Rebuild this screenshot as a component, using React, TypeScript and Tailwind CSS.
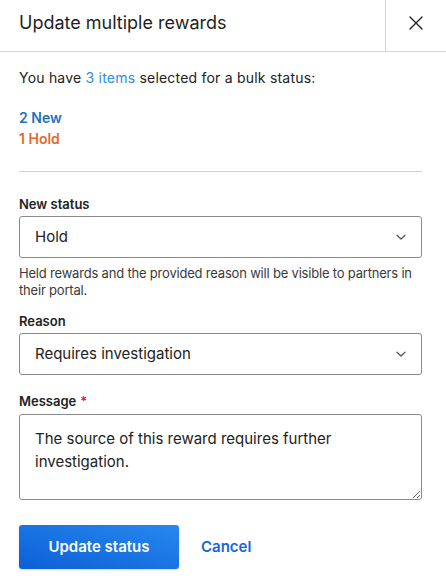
import React from 'react';

function Chevron() {
  return (
    <svg width="12" height="12" viewBox="0 0 12 12" fill="none" className="text-[#555]">
      <path d="M2 4.25 6 8l4-3.75" stroke="currentColor" strokeWidth="1.2" strokeLinecap="round" strokeLinejoin="round" />
    </svg>
  );
}

function SelectBox({ value }: { value: string }) {
  return (
    <div className="flex h-[42px] items-center justify-between rounded-[3px] border border-[#8a8a8a] pl-[15px] pr-[14px] text-[15px] text-[#222]">
      <span>{value}</span>
      <Chevron />
    </div>
  );
}

export default function App() {
  return (
    <div className="h-[584px] w-[446px] bg-white text-[#222]" style={{ fontFamily: 'Inter, "Noto Sans", sans-serif' }}>
      {/* Header */}
      <div className="flex h-[52px] border-b border-[#d4d4d4]">
        <div className="flex flex-1 items-center pl-[19px] pb-[6px] text-[18px] text-[#1f1f1f]">Update multiple rewards</div>
        <button className="flex w-[61px] items-center justify-center border-l border-[#d4d4d4] pb-[6px]">
          <svg width="14" height="14" viewBox="0 0 14 14" fill="none">
            <path d="M1 1l12 12M13 1 1 13" stroke="#222" strokeWidth="1.4" strokeLinecap="round" />
          </svg>
        </button>
      </div>

      <div className="pl-[19px] pr-[24px] pt-[16px]">
        <p className="text-[14px] leading-[20px] tracking-[0.015em] text-[#222]">
          You have <span className="text-[#2f8de4]">3 items</span> selected for a bulk status:
        </p>
        <div className="mt-[19px] text-[14px] font-semibold leading-[21px]">
          <div className="text-[#2270c0]">2 New</div>
          <div className="text-[#e06a2c]">1 Hold</div>
        </div>
        <div className="mt-[22px] border-t border-[#d0d0d0]" />

        {/* New status */}
        <div className="mt-[23px] text-[13px] font-semibold leading-[18px] text-[#222]">New status</div>
        <div className="mt-[3px]">
          <SelectBox value="Hold" />
        </div>
        <p className="mt-[7px] text-[13px] leading-[17px] tracking-[-0.015em] text-[#3a3a3a]">
          Held rewards and the provided reason will be visible to partners in their portal.
        </p>

        {/* Reason */}
        <div className="mt-[13px] text-[13px] font-semibold leading-[18px] text-[#222]">Reason</div>
        <div className="mt-[3px]">
          <SelectBox value="Requires investigation" />
        </div>

        {/* Message */}
        <div className="mt-[17px] flex items-start text-[13px] font-semibold leading-[18px] text-[#222]">
          Message <span className="ml-[4px] text-[#e02424]">*</span>
        </div>
        <textarea
          className="mt-[4px] block h-[86px] w-full resize-y rounded-[3px] border border-[#8a8a8a] px-[15px] pt-[12px] text-[15px] leading-[23px] text-[#222] outline-none"
          defaultValue="The source of this reward requires further investigation."
        />

        <div className="mt-[25px] flex items-center gap-[22px]">
          <button className="h-[44px] w-[160px] rounded-[3px] bg-gradient-to-tr from-[#0d5fd6] to-[#2788ef] text-[15px] font-semibold text-white shadow-[0_1px_2px_rgba(0,0,0,0.15)]">
            Update status
          </button>
          <button className="text-[15px] font-semibold text-[#1766d6]">Cancel</button>
        </div>
      </div>
    </div>
  );
}
